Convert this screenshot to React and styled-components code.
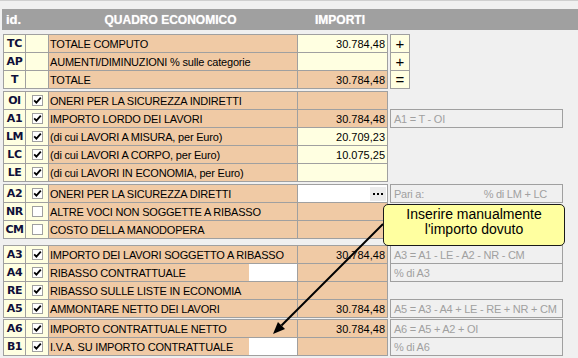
import React from 'react';
import styled, { createGlobalStyle } from 'styled-components';

const GlobalStyle = createGlobalStyle`
  html, body { margin: 0; padding: 0; background: #f0f0f0; }
  body {
    font-family: "Liberation Sans", Arial, sans-serif;
    width: 578px;
    height: 358px;
    overflow: hidden;
  }
`;

const BG = { peach: '#f0caa5', yellow: '#ffffe1', white: '#ffffff' };
const LINE = '#a0a0a0';

const Page = styled.div`
  position: relative;
  width: 578px;
  height: 358px;
  box-sizing: border-box;
  border-top: 1px solid #cfcfcf;
  padding-top: 8px;
`;

const Header = styled.div`
  margin-left: 2px;
  height: 21px;
  background: #a0a0a0;
  display: grid;
  grid-template-columns: 46px 249px 90px;
  align-items: center;
  color: #ffffff;
  font-weight: bold;
  font-size: 12px;
  text-shadow: 0 0 1px rgba(255, 255, 255, 0.6);
`;

const HeadId = styled.div`
  font-size: 13px;
  padding-left: 4px;
`;

const HeadTitle = styled.div`
  text-align: center;
  padding-right: 4px;
`;

const Group = styled.div`
  display: flex;
  align-items: flex-start;
  margin-left: 3px;
  margin-top: ${(p) => p.$mt}px;
`;

const Table = styled.div`
  display: grid;
  grid-template-columns: 21px 22px 248px 89px;
  grid-auto-rows: 17px;
  gap: 1px;
  padding: 1px;
  background: ${LINE};
  width: 385px;
  box-sizing: border-box;
`;

const IdCell = styled.div`
  background: ${BG.yellow};
  display: flex;
  align-items: center;
  justify-content: center;
  font-family: "DejaVu Sans", Verdana, sans-serif;
  font-weight: bold;
  font-size: 11px;
  letter-spacing: -0.4px;
  color: #10103a;
  white-space: nowrap;
`;

const CheckCell = styled.div`
  background: ${BG.yellow};
  display: flex;
  align-items: center;
  justify-content: center;
`;

const Box = styled.div`
  width: 11px;
  height: 11px;
  box-sizing: border-box;
  border: 1px solid #a0a0a0;
  background: #ffffff;
  display: flex;
  align-items: center;
  justify-content: center;
`;

const DescCell = styled.div`
  background: ${BG.peach};
  display: flex;
  align-items: center;
  font-size: 11px;
  letter-spacing: -0.2px;
  color: #000000;
  white-space: nowrap;
  overflow: hidden;
`;

const DescText = styled.span`
  flex: 1;
  padding-left: 1px;
`;

const WhiteInput = styled.span`
  width: 48px;
  align-self: stretch;
  background: #ffffff;
`;

const ValueCell = styled.div`
  background: ${(p) => BG[p.$bg]};
  display: flex;
  align-items: center;
  justify-content: flex-end;
  padding-right: 2px;
  font-size: 11px;
  color: #000000;
`;

const DotsButton = styled.span`
  width: 16px;
  height: 14px;
  margin-right: -1px;
  background: #ececec;
  display: flex;
  align-items: center;
  justify-content: center;
  gap: 2px;
`;

const Dot = styled.span`
  width: 2px;
  height: 2px;
  background: #000000;
`;

const Side = styled.div`
  display: grid;
  grid-template-rows: repeat(${(p) => p.$rows}, 17px);
  row-gap: 1px;
  padding: 1px 0 0 3px;
`;

const SignCell = styled.div`
  width: 18px;
  outline: 1px solid ${LINE};
  background: ${BG.yellow};
  display: flex;
  align-items: center;
  justify-content: center;
  font-size: 15px;
  color: #000000;
`;

const FormulaBox = styled.div`
  width: 171px;
  box-sizing: border-box;
  outline: 1px solid ${LINE};
  padding: 0 ${(p) => (p.$split ? 15 : 3)}px 0 3px;
  display: flex;
  align-items: center;
  justify-content: space-between;
  font-size: 11px;
  letter-spacing: -0.25px;
  color: #a0a0a0;
  white-space: nowrap;
`;

const Tooltip = styled.div`
  position: absolute;
  left: 383px;
  top: 203px;
  width: 182px;
  height: 42px;
  box-sizing: border-box;
  border: 1px solid #1a1a1a;
  border-radius: 5px;
  background: #ffffa0;
  padding-top: 2px;
  text-align: center;
  font-size: 14px;
  line-height: 15px;
  color: #000000;
`;

const ArrowSvg = styled.svg`
  position: absolute;
  left: 260px;
  top: 215px;
  overflow: visible;
`;

const groups = [
  {
    mt: 4,
    rows: [
      { id: 'TC', desc: 'TOTALE COMPUTO', value: '30.784,48', bg: 'yellow', side: { sign: '+' } },
      { id: 'AP', desc: 'AUMENTI/DIMINUZIONI % sulle categorie', value: '', bg: 'yellow', side: { sign: '+' } },
      { id: 'T', desc: 'TOTALE', value: '30.784,48', bg: 'peach', side: { sign: '=' } },
    ],
  },
  {
    mt: 2,
    rows: [
      { id: 'OI', check: true, desc: 'ONERI PER LA SICUREZZA INDIRETTI', value: '', bg: 'peach' },
      { id: 'A1', check: true, desc: 'IMPORTO LORDO DEI LAVORI', value: '30.784,48', bg: 'peach', side: { left: 'A1 = T - OI' } },
      { id: 'LM', check: true, desc: '(di cui LAVORI A MISURA, per Euro)', value: '20.709,23', bg: 'yellow' },
      { id: 'LC', check: true, desc: '(di cui LAVORI A CORPO, per Euro)', value: '10.075,25', bg: 'yellow' },
      { id: 'LE', check: true, desc: '(di cui LAVORI IN ECONOMIA, per Euro)', value: '', bg: 'yellow' },
    ],
  },
  {
    mt: 2,
    rows: [
      { id: 'A2', check: true, desc: 'ONERI PER LA SICUREZZA DIRETTI', value: '', bg: 'white', dots: true, side: { left: 'Pari a:', right: '% di LM + LC' } },
      { id: 'NR', check: false, desc: 'ALTRE VOCI NON SOGGETTE A RIBASSO', value: '', bg: 'peach' },
      { id: 'CM', check: false, desc: 'COSTO DELLA MANODOPERA', value: '', bg: 'peach' },
    ],
  },
  {
    mt: 6,
    rows: [
      { id: 'A3', check: true, desc: 'IMPORTO DEI LAVORI SOGGETTO A RIBASSO', value: '30.784,48', bg: 'peach', side: { left: 'A3 = A1 - LE - A2 - NR - CM' } },
      { id: 'A4', check: true, desc: 'RIBASSO CONTRATTUALE', input: true, value: '', bg: 'peach', side: { left: '% di A3' } },
      { id: 'RE', check: true, desc: 'RIBASSO SULLE LISTE IN ECONOMIA', value: '', bg: 'peach' },
      { id: 'A5', check: true, desc: 'AMMONTARE NETTO DEI LAVORI', value: '30.784,48', bg: 'peach', side: { left: 'A5 = A3 - A4 + LE - RE + NR + CM' } },
    ],
  },
  {
    mt: 1,
    rows: [
      { id: 'A6', check: true, desc: 'IMPORTO CONTRATTUALE NETTO', value: '30.784,48', bg: 'peach', side: { left: 'A6 = A5 + A2 + OI' } },
      { id: 'B1', check: true, desc: 'I.V.A. SU IMPORTO CONTRATTUALE', input: true, value: '', bg: 'peach', side: { left: '% di A6' } },
    ],
  },
];

function CheckBox({ checked }) {
  return (
    <Box>
      {checked && (
        <svg width="9" height="9" viewBox="0 0 9 9">
          <path d="M1.2 4.3 L3.4 6.6 L7.8 1.6" fill="none" stroke="#000" strokeWidth="1.8" />
        </svg>
      )}
    </Box>
  );
}

function SideItem({ side }) {
  if (!side) return <div />;
  if (side.sign) return <SignCell>{side.sign}</SignCell>;
  return (
    <FormulaBox $split={!!side.right}>
      <span>{side.left}</span>
      {side.right && <span>{side.right}</span>}
    </FormulaBox>
  );
}

function Arrow() {
  const x1 = 123, y1 = 8, tx = 13, ty = 118;
  const len = 12, half = 5;
  const dx = tx - x1, dy = ty - y1;
  const d = Math.hypot(dx, dy);
  const ux = dx / d, uy = dy / d;
  const bx = tx - ux * len, by = ty - uy * len;
  const px = -uy * half, py = ux * half;
  return (
    <ArrowSvg width="130" height="125" viewBox="0 0 130 125">
      <line x1={x1} y1={y1} x2={bx} y2={by} stroke="#000" strokeWidth="2" />
      <polygon points={`${tx},${ty} ${bx + px},${by + py} ${bx - px},${by - py}`} fill="#000" />
    </ArrowSvg>
  );
}

export default function App() {
  return (
    <>
      <GlobalStyle />
      <Page>
        <Header>
          <HeadId>id.</HeadId>
          <HeadTitle>QUADRO ECONOMICO</HeadTitle>
          <HeadTitle>IMPORTI</HeadTitle>
        </Header>
        {groups.map((g, gi) => (
          <Group key={gi} $mt={g.mt}>
            <Table>
              {g.rows.map((r) => (
                <React.Fragment key={r.id}>
                  <IdCell>{r.id}</IdCell>
                  <CheckCell>{r.check !== undefined && <CheckBox checked={r.check} />}</CheckCell>
                  <DescCell>
                    <DescText>{r.desc}</DescText>
                    {r.input && <WhiteInput />}
                  </DescCell>
                  <ValueCell $bg={r.bg}>
                    {r.value}
                    {r.dots && (
                      <DotsButton>
                        <Dot />
                        <Dot />
                        <Dot />
                      </DotsButton>
                    )}
                  </ValueCell>
                </React.Fragment>
              ))}
            </Table>
            <Side $rows={g.rows.length}>
              {g.rows.map((r) => (
                <SideItem key={r.id} side={r.side} />
              ))}
            </Side>
          </Group>
        ))}
        <Arrow />
        <Tooltip>
          Inserire manualmente
          <br />
          l'importo dovuto
        </Tooltip>
      </Page>
    </>
  );
}
